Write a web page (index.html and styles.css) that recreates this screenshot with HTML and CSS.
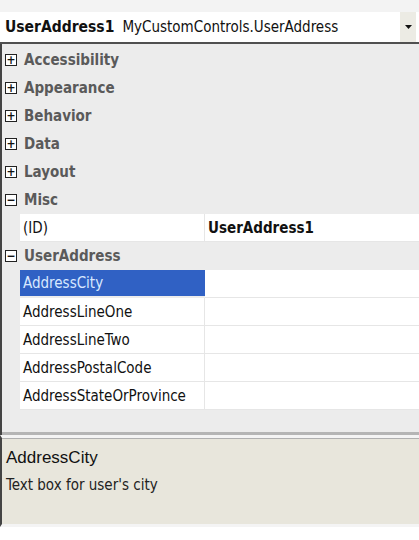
FILE: index.html
```html
<!DOCTYPE html>
<html lang="en">
  <head>
    <meta charset="UTF-8" />
    <title>Properties</title>
    <link rel="stylesheet" href="styles.css">
  </head>
  <body>
    <section class="props">
      <div class="props-top"></div>
      <div class="props-combo">
        <span class="combo-name">UserAddress1</span>
        <span class="combo-type">MyCustomControls.UserAddress</span>
        <span class="combo-btn">
          <svg width="9" height="6" viewBox="0 0 9 6"><path d="M1 1h7L4.5 5z" fill="#111"/></svg>
        </span>
      </div>
      <div class="props-grid">
        <div class="cat"><span class="box">+</span>Accessibility</div>
        <div class="cat"><span class="box">+</span>Appearance</div>
        <div class="cat"><span class="box">+</span>Behavior</div>
        <div class="cat"><span class="box">+</span>Data</div>
        <div class="cat"><span class="box">+</span>Layout</div>
        <div class="cat"><span class="box">&minus;</span>Misc</div>
        <div class="prop">
          <span class="prop-name">(ID)</span>
          <span class="prop-value bold">UserAddress1</span>
        </div>
        <div class="cat"><span class="box">&minus;</span>UserAddress</div>
        <div class="prop">
          <span class="prop-name selected">AddressCity</span>
          <span class="prop-value"></span>
        </div>
        <div class="prop">
          <span class="prop-name">AddressLineOne</span>
          <span class="prop-value"></span>
        </div>
        <div class="prop">
          <span class="prop-name">AddressLineTwo</span>
          <span class="prop-value"></span>
        </div>
        <div class="prop">
          <span class="prop-name">AddressPostalCode</span>
          <span class="prop-value"></span>
        </div>
        <div class="prop">
          <span class="prop-name">AddressStateOrProvince</span>
          <span class="prop-value"></span>
        </div>
      </div>
      <div class="props-split"></div>
      <div class="props-desc">
        <div class="desc-title">AddressCity</div>
        <div class="desc-text">Text box for user's city</div>
      </div>
    </section>
  </body>
</html>
```

FILE: styles.css
```css
html {
  box-sizing: border-box;
}
*,
*::after,
*::before {
  box-sizing: inherit;
}

body {
  margin: 0;
  background-color: #fff;
  font-family: 'DejaVu Sans Condensed', 'DejaVu Sans', sans-serif;
  color: #111;
}

.props {
  width: 419px;
  height: 540px;
  display: flex;
  flex-direction: column;
}

.props-top {
  height: 12px;
  background-color: #f3f3f3;
}

.props-combo {
  height: 32px;
  display: flex;
  align-items: center;
  background-color: #fff;
  border-bottom: 2px solid #505050;
  padding-left: 5px;
  padding-right: 3px;
}

.combo-name {
  font-weight: bold;
  font-size: 15.5px;
  margin-right: 8px;
}

.combo-type {
  font-size: 15px;
  flex: 1;
}

.combo-btn {
  width: 16px;
  height: 30px;
  display: flex;
  align-items: center;
  justify-content: center;
  background-color: #ecebe4;
}

.props-grid {
  border-left: 2px solid #444;
  background-color: #ececec;
  padding-top: 2px;
  height: 388px;
}

.cat {
  height: 28px;
  display: flex;
  align-items: center;
  padding-left: 3px;
  font-weight: bold;
  font-size: 15px;
  color: #5a5a5a;
}

.box {
  width: 12px;
  height: 12px;
  border: 1px solid #222;
  background-color: #fff;
  color: #111;
  font-size: 12px;
  font-weight: bold;
  line-height: 9px;
  display: flex;
  align-items: center;
  justify-content: center;
  margin-right: 7px;
}

.prop {
  height: 28px;
  display: flex;
  padding-left: 18px;
  font-size: 15px;
}

.prop-name {
  width: 185px;
  display: flex;
  align-items: center;
  padding-left: 3px;
  background-color: #fff;
  border-bottom: 1px solid #e6e6e6;
  border-right: 1px solid #e6e6e6;
}

.prop-name.selected {
  background-color: #3061c4;
  color: #d8e8ff;
  border-color: #3061c4;
  height: 26px;
}

.prop-value {
  flex: 1;
  display: flex;
  align-items: center;
  padding-left: 3px;
  background-color: #fff;
  border-bottom: 1px solid #e6e6e6;
}

.bold {
  font-weight: bold;
}

.props-split {
  height: 3px;
  border-left: 2px solid #444;
  background-color: #b5b5b5;
}

.props-desc {
  height: 92px;
  border-left: 2px solid #444;
  border-top: 3px solid #f4f4f4;
  box-shadow: inset 0 1px 0 #b0b0b0;
  background-color: #e8e6dc;
  padding: 10px 4px 4px;
  border-bottom: 3px solid #f4f4f4;
}

.desc-title {
  font-family: 'Liberation Sans', Arial, sans-serif;
  font-size: 17px;
  margin-bottom: 8px;
}

.desc-text {
  font-size: 15px;
  color: #222;
}
```
